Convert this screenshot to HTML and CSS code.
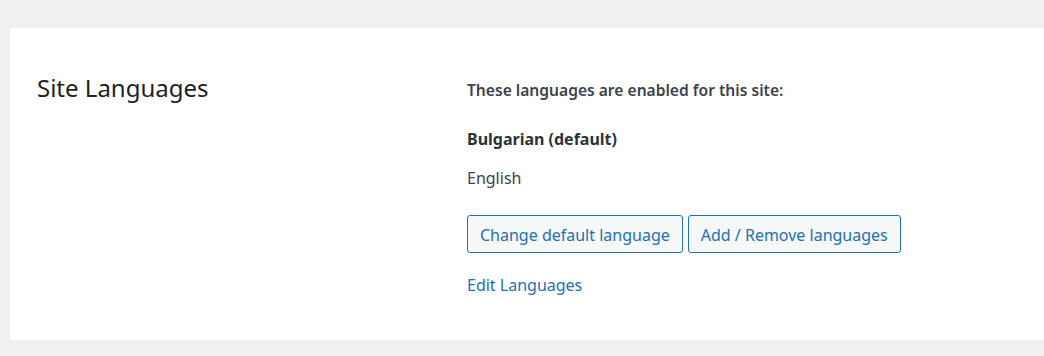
FILE: index.html
```html
<!DOCTYPE html>
<html lang="en">
<head>
<meta charset="utf-8">
<title>Site Languages</title>
<link rel="stylesheet" href="styles.css">
</head>
<body>
<section class="panel">
  <div class="label-col">
    <h2 class="title">Site Languages</h2>
  </div>
  <div class="content-col">
    <p class="intro">These languages are enabled for this site:</p>
    <p class="lang lang-default">Bulgarian (default)</p>
    <p class="lang">English</p>
    <div class="actions">
      <button class="btn" type="button">Change default language</button>
      <button class="btn" type="button">Add / Remove languages</button>
    </div>
    <a class="edit-link" href="#">Edit Languages</a>
  </div>
</section>
</body>
</html>
```
FILE: styles.css
```css
html, body {
  margin: 0;
  padding: 0;
}
body {
  background: #f0f0f1;
  font-family: "Noto Sans", "Open Sans", sans-serif;
  color: #3c434a;
  padding-top: 28px;
  padding-left: 10px;
  height: 356px;
  box-sizing: border-box;
}
.panel {
  background: #fff;
  height: 312px;
  display: grid;
  grid-template-columns: 430px 1fr;
  padding-left: 27px;
  box-sizing: border-box;
}
.title {
  margin: 0;
  padding-top: 44px;
  font-size: 24px;
  line-height: 32px;
  font-weight: 400;
  color: #1d2327;
}
.content-col {
  padding-top: 50px;
  display: flex;
  flex-direction: column;
  align-items: flex-start;
}
.intro {
  margin: 0;
  font-size: 15.6px;
  line-height: 24px;
  font-weight: 600;
  color: #3c434a;
}
.lang {
  margin: 15px 0 0;
  font-size: 16px;
  line-height: 24px;
}
.lang-default {
  margin-top: 25px;
  font-weight: 700;
  color: #2c3338;
}
.actions {
  margin-top: 25px;
  display: flex;
  gap: 5px;
}
.btn {
  font-family: inherit;
  font-size: 16px;
  line-height: 34px;
  height: 38px;
  padding: 2px 12px 0;
  box-sizing: border-box;
  color: #2271b1;
  background: #f6f7f7;
  border: 1px solid #2271b1;
  border-radius: 3px;
  cursor: pointer;
}
.edit-link {
  margin-top: 20px;
  font-size: 16px;
  line-height: 24px;
  color: #2271b1;
  text-decoration: none;
}
```
